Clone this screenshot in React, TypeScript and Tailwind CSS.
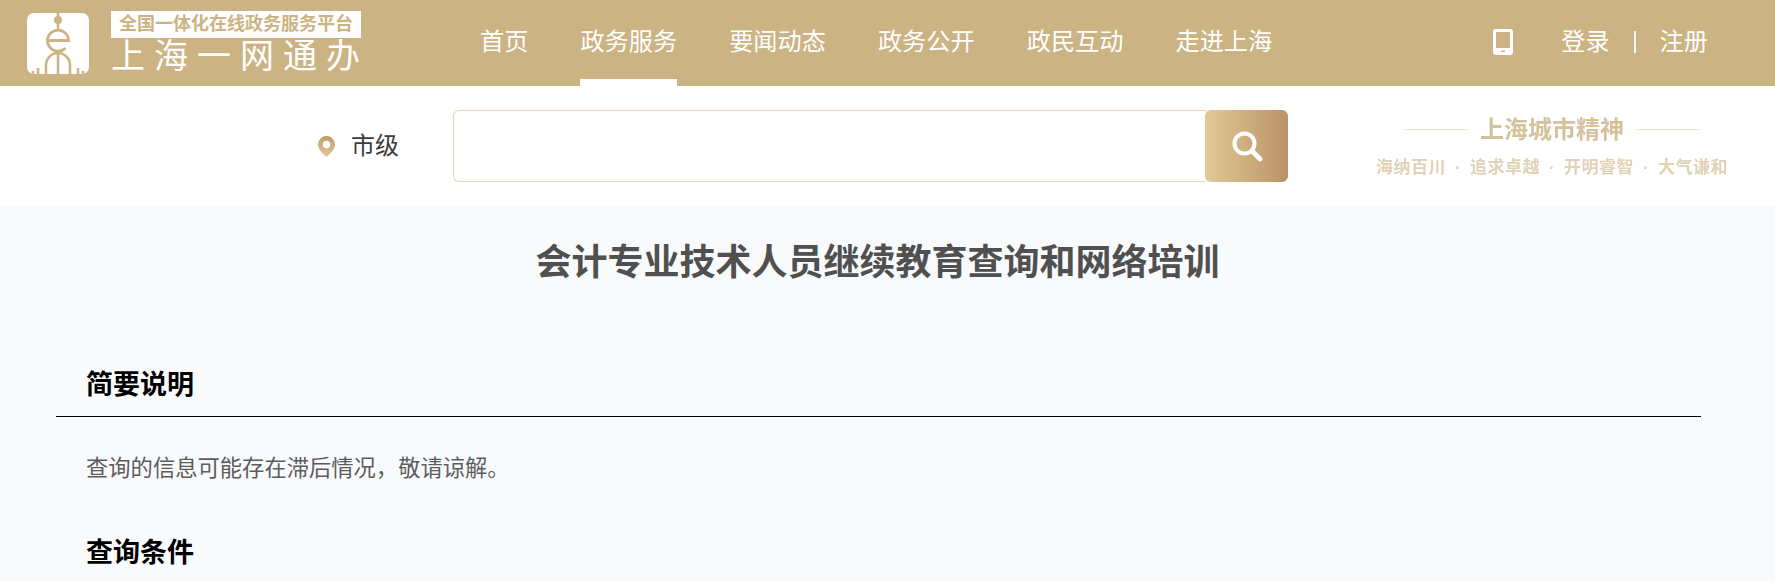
const navItems = ["首页", "政务服务", "要闻动态", "政务公开", "政民互动", "走进上海"];
const spiritItems = ["海纳百川", "·", "追求卓越", "·", "开明睿智", "·", "大气谦和"];

function LogoMark() {
  return (
    <div className="w-[62px] h-[61px] bg-white rounded-[7px] overflow-hidden shrink-0">
      <svg viewBox="0 0 62 61" className="w-full h-full" fill="none" stroke="#cbb383" strokeWidth="2.500">
        <path d="M31 0v4M31 10v7" />
        <circle cx="31" cy="7" r="4" fill="#cbb383" stroke="none" />
        {/* the letter e */}
        <path d="M21 27.500h20.500a10.500 10.500 0 1 0-3 7.500" strokeWidth="2.800" />
        <path d="M31 39v22M19 61v-9a12 12 0 0 1 24 0v9" />
        <path d="M11 61v-6M6 61v-3M51 61v-6M56 61v-3" />
      </svg>
    </div>
  );
}

function Header() {
  return (
    <header className="h-[86px] bg-[#cbb383] flex items-center text-white">
      <div className="w-[480px] pl-[27px] flex items-center gap-[22px] shrink-0">
        <LogoMark />
        <div className="w-[250px] pb-[2px]">
          <div className="h-[27px] bg-white text-[#cbb383] text-[18px] font-bold leading-[27px] text-center whitespace-nowrap">
            全国一体化在线政务服务平台
          </div>
          <div className="text-[34px] leading-[36px] tracking-[9px] whitespace-nowrap">上海一网通办</div>
        </div>
      </div>
      <nav className="flex h-full gap-[52px]">
        {navItems.map((item) => (
          <a
            key={item}
            className={
              item === "政务服务"
                ? "h-full flex items-center text-[24.2px] border-b-[7px] border-white pt-[5px]"
                : "h-full flex items-center text-[24.2px] pb-[2px]"
            }
          >
            {item}
          </a>
        ))}
      </nav>
      <div className="ml-auto flex items-center pr-[67px] pb-[2px] text-[24.2px]">
        <svg viewBox="0 0 20 26" className="w-[20px] h-[26px] mr-[48px]">
          <path
            fillRule="evenodd"
            fill="#fff"
            d="M3 0h14a3 3 0 0 1 3 3v20a3 3 0 0 1-3 3H3a3 3 0 0 1-3-3V3a3 3 0 0 1 3-3zM3 3v16h14V3zM8 21.500v1.500h4v-1.500z"
          />
        </svg>
        <a>登录</a>
        <span className="mx-[24px] w-[2px] h-[22px] bg-white/90" />
        <a>注册</a>
      </div>
    </header>
  );
}

function SearchBar() {
  return (
    <div className="h-[120px] bg-white flex items-center relative">
      <div className="w-[453px] flex items-center justify-end pr-[54px] gap-[16px] text-[24px] text-[#3c3c3c]">
        <svg viewBox="0 0 18 22" className="w-[17px] h-[21px]">
          <defs>
            <linearGradient id="pin" x1="0" y1="0" x2="0" y2="1">
              <stop offset="0" stopColor="#bd9a6c" />
              <stop offset="1" stopColor="#e2c999" />
            </linearGradient>
          </defs>
          <path
            fillRule="evenodd"
            fill="url(#pin)"
            d="M9 0a9 9 0 0 1 9 9c0 5-5 10-9 13C5 19 0 14 0 9a9 9 0 0 1 9-9zm0 5a4 4 0 1 0 0 8 4 4 0 0 0 0-8z"
          />
        </svg>
        <span>市级</span>
      </div>
      <div className="w-[835px] h-[72px] flex">
        <input className="flex-1 border border-[#e5d6b8] border-r-0 rounded-l-[6px] outline-none" />
        <button className="w-[83px] h-full rounded-[6px] -ml-[1px] bg-gradient-to-r from-[#e3c995] to-[#b99369] flex items-center justify-center">
          <svg viewBox="0 0 32 32" className="w-[32px] h-[32px]" fill="none" stroke="#fff" strokeLinecap="round">
            <circle cx="13.500" cy="13.500" r="10" strokeWidth="4" />
            <path d="M21 21l8 8" strokeWidth="5" />
          </svg>
        </button>
      </div>
      <div className="ml-[87px] w-[354px] pt-[1px] text-center font-bold blur-[0.7px]">
        <div className="flex items-center justify-center gap-[12px] text-[#d4c29c] text-[24px] leading-[30px]">
          <span className="w-[64px] h-px bg-[#ece3d0]" />
          上海城市精神
          <span className="w-[64px] h-px bg-[#ece3d0]" />
        </div>
        <div className="mt-[12px] mx-auto w-[352px] flex justify-between text-[#e0d2b6] text-[17px] leading-[22px] tracking-[0.5px] whitespace-nowrap">
          {spiritItems.map((item, index) => (
            <span key={index}>{item}</span>
          ))}
        </div>
      </div>
    </div>
  );
}

function Section({ title, children }: { title: string; children?: React.ReactNode }) {
  return (
    <section>
      <h2 className="pl-[30px] text-[27px] font-bold leading-[36px] text-black">{title}</h2>
      {children}
    </section>
  );
}

export default function App() {
  return (
    <div
      className="w-[1775px] h-[581px] overflow-hidden bg-[#f9fafc]"
      style={{ fontFamily: '"Liberation Sans", "Microsoft YaHei", "Noto Sans CJK SC", sans-serif' }}
    >
      <Header />
      <SearchBar />
      <main className="px-[56px]">
        <h1 className="pt-[35px] pr-[20px] text-center text-[36px] font-bold leading-[44px] text-[#505050]">
          会计专业技术人员继续教育查询和网络培训
        </h1>
        <div className="mt-[82px]">
          <Section title="简要说明">
            <div className="mt-[13px] border-t border-black w-[1645px]" />
            <p className="pl-[30px] mt-[37px] text-[22.3px] leading-[30px] text-[#5c5c5c]">
              查询的信息可能存在滞后情况，敬请谅解。
            </p>
          </Section>
          <div className="mt-[51px]">
            <Section title="查询条件" />
          </div>
        </div>
      </main>
    </div>
  );
}
